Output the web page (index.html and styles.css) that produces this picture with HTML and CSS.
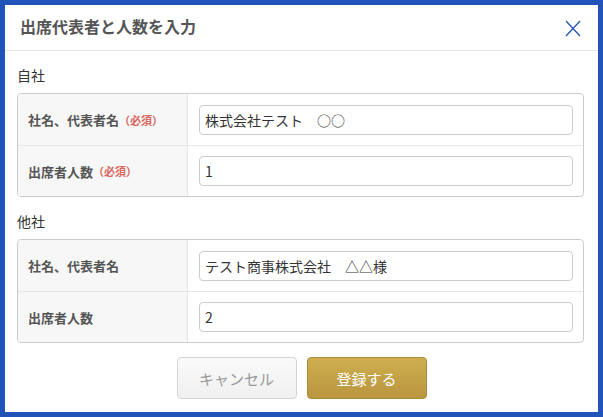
FILE: index.html
```html
<!DOCTYPE html>
<html lang="ja">
<head>
<meta charset="utf-8">
<link rel="stylesheet" href="styles.css">
</head>
<body>
<div class="dialog">
  <div class="dialog-header">
    <h1 class="dialog-title">出席代表者と人数を入力</h1>
    <button class="close-btn" aria-label="閉じる">
      <svg width="16" height="17" viewBox="0 0 16 17"><path d="M1 1 L15 16 M15 1 L1 16" stroke="#2354b7" stroke-width="1.3" fill="none"/></svg>
    </button>
  </div>
  <div class="dialog-body">
    <div class="section-title">自社</div>
    <div class="form-table">
      <div class="form-row">
        <div class="form-label">社名、代表者名<span class="req">（必須）</span></div>
        <div class="form-field"><input class="text-input" type="text" value="株式会社テスト　○○"></div>
      </div>
      <div class="form-row">
        <div class="form-label">出席者人数<span class="req">（必須）</span></div>
        <div class="form-field"><input class="text-input" type="text" value="1"></div>
      </div>
    </div>
    <div class="section-title">他社</div>
    <div class="form-table">
      <div class="form-row">
        <div class="form-label">社名、代表者名</div>
        <div class="form-field"><input class="text-input" type="text" value="テスト商事株式会社　△△様"></div>
      </div>
      <div class="form-row">
        <div class="form-label">出席者人数</div>
        <div class="form-field"><input class="text-input" type="text" value="2"></div>
      </div>
    </div>
    <div class="actions">
      <button class="btn btn-cancel">キャンセル</button>
      <button class="btn btn-primary">登録する</button>
    </div>
  </div>
</div>
</body>
</html>
```
FILE: styles.css
```css
* { box-sizing: border-box; }
html, body { margin: 0; padding: 0; }
body {
  background: #2153b9;
  width: 603px;
  height: 417px;
  padding: 5px;
  font-family: "Noto Sans CJK JP", "Noto Sans", "Liberation Sans", sans-serif;
  color: #333;
}
.dialog {
  background: #fff;
  width: 593px;
  height: 407px;
  display: flex;
  flex-direction: column;
}
.dialog-header {
  height: 46px;
  border-bottom: 1px solid #e6e6e6;
  display: flex;
  align-items: center;
  justify-content: space-between;
  padding: 0 17px 0 15px;
}
.dialog-title {
  margin: 0;
  font-size: 16px;
  font-weight: bold;
  color: #555;
  line-height: 1;
  margin-top: -4px;
}
.close-btn {
  background: none;
  border: 0;
  padding: 0;
  width: 16px;
  height: 17px;
  display: block;
  margin-top: 1px;
}
.close-btn svg { display: block; }
.dialog-body {
  padding: 0 14px 0 12px;
  display: flex;
  flex-direction: column;
}
.section-title {
  height: 42px;
  display: flex;
  align-items: center;
  font-size: 14px;
  color: #333;
  padding-top: 5px;
}
.form-table {
  border: 1px solid #ccc;
  border-radius: 4px;
  overflow: hidden;
}
.form-row {
  display: grid;
  grid-template-columns: 170px 1fr;
  height: 51px;
}
.form-row + .form-row { border-top: 1px solid #e6e6e6; }
.form-label {
  background: #f7f7f7;
  border-right: 1px solid #e6e6e6;
  display: flex;
  align-items: center;
  padding-left: 10px;
  font-size: 13px;
  font-weight: bold;
  color: #555;
}
.req {
  color: #d9675f;
  font-size: 11px;
}
.form-field {
  display: flex;
  align-items: center;
  padding: 0 10px 0 11px;
}
.text-input {
  width: 100%;
  height: 30px;
  border: 1px solid #ccc;
  border-radius: 4px;
  padding: 0 5px;
  font-family: "Noto Sans CJK JP", "Noto Sans", "Liberation Sans", sans-serif;
  font-size: 14px;
  color: #333;
  background: #fff;
}
.actions {
  display: flex;
  justify-content: center;
  gap: 10px;
  padding-top: 14px;
  padding-left: 2px;
}
.btn {
  width: 120px;
  height: 42px;
  border-radius: 4px;
  font-family: "Noto Sans CJK JP", "Noto Sans", "Liberation Sans", sans-serif;
  font-size: 15px;
}
.btn-cancel {
  background: linear-gradient(#fafafa, #f0f0f0);
  border: 1px solid #d4d4d4;
  color: #999;
}
.btn-primary {
  background: linear-gradient(#cfae4f, #b99640);
  border: 1px solid #a98b3c;
  color: #fff;
}
```
